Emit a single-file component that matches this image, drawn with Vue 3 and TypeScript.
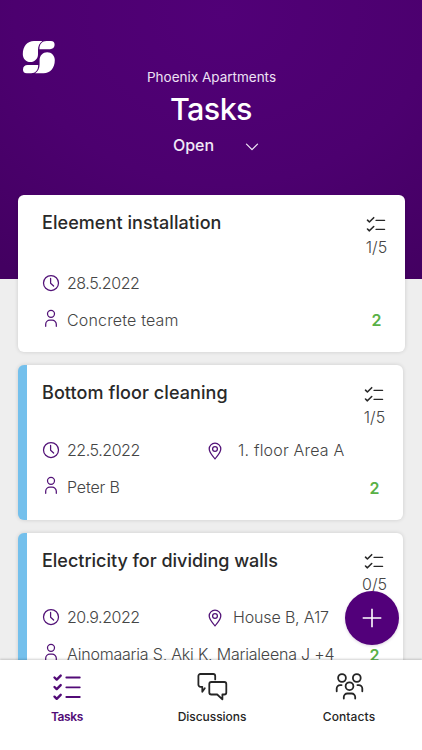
<script setup lang="ts">
interface Task {
  id: number
  title: string
  date: string
  place?: string
  placeClass?: string
  people: string
  progress: string
  comments: number
  lead?: boolean
}

const tasks: Task[] = [
  { id: 1, title: 'Eleement installation', date: '28.5.2022', people: 'Concrete team', progress: '1/5', comments: 2, lead: true },
  { id: 2, title: 'Bottom floor cleaning', date: '22.5.2022', place: '1. floor Area A', placeClass: 'area', people: 'Peter B', progress: '1/5', comments: 2 },
  { id: 3, title: 'Electricity for dividing walls', date: '20.9.2022', place: 'House B, A17', placeClass: 'house', people: 'Ainomaaria S, Aki K, Marjaleena J +4', progress: '0/5', comments: 2 },
]
</script>

<template>
  <div class="screen">
    <header class="hero">
      <svg class="logo" viewBox="0 0 34 34">
        <path d="M12 1H20.500C17.400 3 16 6 16 10V14.200C16 18.800 12.600 22 8.400 22C4 22 .8 18.600 .8 14.200C.8 6 5.500 1 12 1Z" />
        <path d="M17.400 9.200C17.400 4 20 1 24.500 1H28.800C31.600 1 32.600 2.700 32.600 4.800C32.600 7.600 30.800 9.200 28 9.200Z" />
        <path d="M21.600 33.200H13.100C16.200 31.200 17.600 28.200 17.600 24.200V20C17.600 15.400 21 12.200 25.200 12.200C29.600 12.200 32.800 15.600 32.800 20C32.800 28.200 28.100 33.200 21.600 33.200Z" />
        <path d="M16.200 25C16.200 30.200 13.600 33.200 9.100 33.200H4.800C2 33.200 1 31.500 1 29.400C1 26.600 2.800 25 5.600 25Z" />
      </svg>
      <div class="project">Phoenix Apartments</div>
      <h1>Tasks</h1>
      <div class="filter">
        <span>Open</span>
        <svg class="chevron" viewBox="0 0 14 8"><path d="M1.500 1.200L7 6.700L12.500 1.200" /></svg>
      </div>
    </header>

    <main class="list">
      <article v-for="t in tasks" :key="t.id" class="card" :class="{ lead: t.lead }">
        <div class="body">
          <h2 :class="'title-' + t.id">{{ t.title }}</h2>
          <div class="row">
            <div class="when">
              <svg class="icon" viewBox="0 0 18 18">
                <circle cx="9" cy="9" r="7.500" /><path d="M8.600 4.400V9.200L11.600 12" />
              </svg>
              <span class="date">{{ t.date }}</span>
            </div>
            <div v-if="t.place" class="where">
              <svg class="icon pin" viewBox="0 0 18 18">
                <path d="M9 16.900C7 14 3.200 10.600 3.200 7A5.800 5.800 0 0 1 14.800 7C14.800 10.600 11 14 9 16.900Z" /><circle cx="9" cy="7" r="2.400" />
              </svg>
              <span :class="t.placeClass">{{ t.place }}</span>
            </div>
          </div>
          <div class="row">
            <svg class="icon person" viewBox="0 0 18 18">
              <circle cx="9" cy="4.800" r="3.500" /><path d="M3.700 17.300V15.300A4.200 4.200 0 0 1 7.900 11.100H10.100A4.200 4.200 0 0 1 14.300 15.300V17.300" />
            </svg>
            <span :class="'people-' + t.id">{{ t.people }}</span>
          </div>
        </div>
        <div class="side">
          <svg class="checks" viewBox="0 0 20 16">
            <path class="tick" d="M1.500 4.200L3.400 6L7.700 1.700M1.500 13L3.400 14.800L7.700 10.500" />
            <path d="M10 4.300H18.600M10 13.300H18.600" />
          </svg>
          <span class="progress">{{ t.progress }}</span>
          <span class="comments">{{ t.comments }}</span>
        </div>
      </article>
    </main>

    <button class="add" type="button" aria-label="Add task">
      <svg viewBox="0 0 20 20"><path d="M10 .7V19.300M.7 10H19.300" /></svg>
    </button>

    <nav class="tabs">
      <div class="tab active">
        <svg viewBox="0 0 32 32">
          <path class="tick" d="M3.500 6.500L5.700 8.600L9.700 4.600M3.500 16L5.700 18.100L9.700 14.100M3.500 25.700L5.700 27.800L9.700 23.800" />
          <path d="M15.300 6.500H28.800M15.300 16.300H28.800M15.300 26H28.800" />
        </svg>
        <span class="home">Tasks</span>
      </div>
      <div class="tab middle">
        <svg viewBox="0 0 32 32">
          <path d="M8.800 17.300L6.300 20.700V15.800H4.400A2 2 0 0 1 2.400 13.800V5A2 2 0 0 1 4.400 3H17.200A2 2 0 0 1 19.200 5V8.400M15.300 11H28.300A2 2 0 0 1 30.300 13V21.500A2 2 0 0 1 28.300 23.500H26.400V28.300L21.200 23.500H15.300A2 2 0 0 1 13.300 21.500V13A2 2 0 0 1 15.300 11Z" />
        </svg>
        <span class="talk">Discussions</span>
      </div>
      <div class="tab">
        <svg viewBox="0 0 32 32">
          <circle cx="9" cy="7" r="3.900" /><circle cx="23.800" cy="7" r="3.900" /><circle cx="16.500" cy="15.200" r="3.900" />
          <path d="M3.700 20.300V17.600A3.500 3.500 0 0 1 7.200 14.100H8.600M29.300 20.300V17.600A3.500 3.500 0 0 0 25.800 14.100H24.400M10.800 27.500V26A3.500 3.500 0 0 1 14.300 22.500H18.700A3.500 3.500 0 0 1 22.200 26V27.500" />
        </svg>
        <span class="contacts">Contacts</span>
      </div>
    </nav>
  </div>
</template>

<style>
body { background: #fff; }
</style>

<style scoped>
.screen {
  position: relative;
  display: flex;
  flex-direction: column;
  width: 422px;
  height: 750px;
  overflow: hidden;
  background: #eee;
  font-family: Inter, "Liberation Sans", sans-serif;
}
svg { display: block; fill: none; stroke: currentColor; stroke-linecap: round; stroke-linejoin: round; }
.hero {
  display: flex;
  flex-direction: column;
  align-items: center;
  flex: none;
  box-sizing: border-box;
  height: 279px;
  padding-top: 40px;
  color: #fff;
  background: radial-gradient(ellipse 380px 310px at 53% 5%, #510077 0%, #4c006f 55%, #430061 100%);
}
.logo { width: 34px; height: 34px; align-self: flex-start; margin-left: 22px; fill: #fff; stroke: none; }
.project { margin: -7px 0 0 1px; line-height: 20px; font-size: 13.500px; letter-spacing: 0; color: #eee2f4; }
h1 { margin: 3px 0 0; line-height: 38px; font-size: 30.500px; font-weight: 500; letter-spacing: -.6px; }
.filter { display: flex; align-items: center; gap: 31px; margin: 6px 0 0 10px; line-height: 22px; font-size: 16px; font-weight: 500; color: #f2e9f7; }
.chevron { width: 14px; height: 8px; margin-top: 3px; stroke-width: 1.200; }
.list { display: flex; flex-direction: column; flex: 1; min-height: 0; margin-top: -84px; padding: 0 19px 0 18px; overflow: hidden; }
.card {
  display: flex;
  flex: none;
  box-sizing: border-box;
  height: 154.500px;
  margin-bottom: 13px;
  border-left: 9px solid #74c0ec;
  border-radius: 6px;
  background: #fff;
  box-shadow: 0 0 4px rgba(0, 0, 0, .14);
}
.card.lead { height: 157px; margin-right: -2px; border-left-color: #fff; }
.body { flex: 1; min-width: 0; padding: 15px 0 0 15px; }
h2 { margin: 0 0 32.500px; line-height: 25px; font-size: 18px; font-weight: 500; color: #292929; white-space: nowrap; }
.title-1 { letter-spacing: .07px; }
.title-2 { letter-spacing: .08px; }
.title-3 { letter-spacing: -.02px; }
.lead h2 { margin-bottom: 35.500px; }
.row { display: flex; height: 25px; margin-bottom: 12px; line-height: 25px; font-size: 16px; font-weight: 300; color: #454545; white-space: nowrap; }
.when { display: flex; width: 164px; }
.where { display: flex; }
.date { letter-spacing: -.45px; }
.icon { flex: none; width: 18px; height: 18px; margin: 3px 7px 0 0; color: #521277; stroke-width: 1.250; }
.icon.person { margin-top: 1px; }
.icon.pin { margin-top: 4px; }
.area { margin-left: 7px; letter-spacing: .2px; }
.house { margin-left: 2px; letter-spacing: -.15px; }
.people-1 { letter-spacing: .17px; }
.people-2 { letter-spacing: -.15px; }
.people-3 { letter-spacing: -.2px; }
.side { display: flex; flex-direction: column; align-items: center; flex: none; width: 57px; padding-top: 20.500px; font-size: 16px; line-height: 22px; }
.checks { width: 20px; height: 16px; margin-right: 1px; color: #272727; stroke-width: 1.350; }
.checks .tick { stroke-width: 1.600; }
.progress { margin-top: 4px; font-weight: 300; color: #454545; }
.comments { margin-top: 49px; font-weight: 600; color: #59b146; }
.lead .comments { margin-top: 51px; }
.add {
  position: absolute;
  left: 345px;
  top: 590.500px;
  display: flex;
  align-items: center;
  justify-content: center;
  width: 54px;
  height: 54px;
  padding: 0;
  border: 0;
  border-radius: 50%;
  color: #fff;
  background: #52007a;
  box-shadow: 0 1px 3px rgba(60, 0, 90, .18);
}
.add svg { width: 20px; height: 20px; stroke-width: 1.600; stroke-linecap: butt; }
.tabs {
  display: flex;
  justify-content: space-between;
  flex: none;
  box-sizing: border-box;
  height: 90px;
  padding: 11px 13px 0 7px;
  background: #fff;
  box-shadow: 0 -1px 2px rgba(0, 0, 0, .18);
}
.tab { display: flex; flex-direction: column; align-items: center; width: 120px; color: #252525; font-size: 12px; font-weight: 500; line-height: 18px; }
.tab.middle { margin-left: 8px; }
.tab svg { width: 32px; height: 32px; margin-bottom: 5px; stroke-width: 1.800; }
.tab .tick { stroke-width: 2.400; }
.tab.active { color: #520b77; font-weight: 600; }
.home { letter-spacing: -.35px; }
.talk { letter-spacing: -.05px; }
.contacts { letter-spacing: .1px; }
</style>
